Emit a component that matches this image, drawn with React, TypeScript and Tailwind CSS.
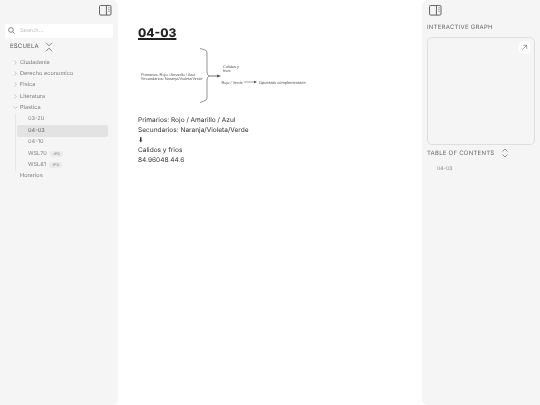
import React from "react";

const font = { fontFamily: "Inter, sans-serif" };

function PanelIcon({ className }: { className?: string }) {
  return (
    <svg viewBox="0 0 14 12" width="13" height="11" className={className} fill="none" stroke="#555" strokeWidth="1">
      <rect x="0.5" y="0.5" width="12.5" height="10.5" rx="1.2" />
      <path d="M8 0.5V11" />
      <path d="M10 3h1.5M10 5h1.5M10 7h1.5" strokeWidth="0.7" />
    </svg>
  );
}

function Chevron({ open }: { open?: boolean }) {
  return (
    <svg viewBox="0 0 6 6" className="w-[5px] h-[5px] shrink-0 -mt-[1px]" fill="none" stroke="#aaa" strokeWidth="0.7">
      {open ? <path d="M0.7 1.8 3 4.2l2.3-2.4" /> : <path d="M1.8 0.7 4.2 3 1.8 5.3" />}
    </svg>
  );
}

function Row({ label, open, chevron = true }: { label: string; open?: boolean; chevron?: boolean }) {
  return (
    <div className="flex items-center h-[11.4px] pl-[13px] gap-[2px] text-[5.6px] text-[#7a7a7a]">
      {chevron ? <Chevron open={open} /> : <span className="w-[5px]" />}
      <span>{label}</span>
    </div>
  );
}

function Leaf({ label, tag, active }: { label: string; tag?: string; active?: boolean }) {
  return (
    <div className={`flex items-center h-[11.4px] pl-[11px] gap-[3px] text-[5.6px] rounded-[2px] ${active ? "bg-[#e3e3e3] text-[#666]" : "text-[#858585]"}`}>
      <span>{label}</span>
      {tag && <span className="bg-[#ebebeb] rounded-[2px] px-[3px] text-[3.5px] leading-[6px] tracking-wide text-[#777]">{tag}</span>}
    </div>
  );
}

function Diagram() {
  const t = { fontFamily: "'Liberation Sans', Arial, sans-serif", fontSize: 3.9, fill: "#555" };
  return (
    <svg width="170" height="56" viewBox="0 0 170 56" className="mt-[6px] block">
      <text x="3" y="27.5" style={t}>Primarios: Rojo / Amarillo / Azul</text>
      <text x="3" y="32" style={t}>Secundarios: Naranja/Violeta/Verde</text>
      <path d="M62 0.5 L67 2 Q69 2.5 69 5 V24 Q69 27 71 28 Q69 29 69 32 V50 Q69 52 67 52.5 L62 54.5" fill="none" stroke="#666" strokeWidth="0.7" />
      <path d="M71 28h10" stroke="#666" strokeWidth="0.9" />
      <path d="M79 26.5 83 28l-4 1.5z" fill="#555" />
      <text x="85" y="20" style={t}>Calidos y</text>
      <text x="85" y="24" style={t}>frios</text>
      <text x="83.5" y="35.5" style={t}>Rojo / Verde</text>
      <path d="M106 34h12" stroke="#666" strokeWidth="0.6" />
      <path d="M116 32.8 119 34l-3 1.2z" fill="#555" />
      <text x="121" y="35.5" style={{ ...t, fontSize: 4 }}>Opuestos complementarie</text>
    </svg>
  );
}

export default function App() {
  return (
    <div style={font} className="flex w-[540px] h-[405px] overflow-hidden bg-white [text-rendering:geometricPrecision]">
      <aside className="w-[118px] shrink-0 h-full bg-[#f5f5f5] rounded-r-[6px]">
        <div className="flex flex-col h-full will-change-transform">
          <div className="flex justify-end pt-[5px] pr-[6px] h-[24px]">
            <PanelIcon />
          </div>
          <div className="mx-[5px] h-[14px] bg-white rounded-[2px] flex items-center pl-[3px] gap-[5px] text-[5.6px] text-[#c0c0c0]">
            <svg viewBox="0 0 8 8" className="w-[7px] h-[7px] -mt-[1px]" fill="none" stroke="#555" strokeWidth="0.8">
              <circle cx="3.4" cy="3.4" r="2.7" />
              <path d="M5.4 5.4 7.5 7.5" />
            </svg>
            <span>Search...</span>
          </div>
          <div className="flex items-center h-[13px] mt-[2px] pl-[10px] gap-[6px] text-[6px] tracking-[0.2px] text-[#555]">
            <span>ESCUELA</span>
            <svg viewBox="0 0 8 10" className="w-[8px] h-[10px]" fill="none" stroke="#555" strokeWidth="0.7">
              <path d="M1 0.8 4 3.8l3-3M1 9.2 4 6.2l3 3" />
            </svg>
          </div>
          <div className="mt-[4px] flex flex-col">
            <Row label="Ciudadania" />
            <Row label="Derecho economico" />
            <Row label="Fisica" />
            <Row label="Literatura" />
            <Row label="Plastica" open />
            <div className="ml-[15px] mr-[10px] pl-[1px] border-l border-[#e6e6e6] flex flex-col">
              <Leaf label="03-20" />
              <Leaf label="04-03" active />
              <Leaf label="04-10" />
              <Leaf label="WSL70" tag="JPG" />
              <Leaf label="WSL81" tag="JPG" />
            </div>
            <Row label="Horarios" chevron={false} />
          </div>
        </div>
      </aside>

      <main className="flex-1 pl-[20px] pt-[23px] will-change-transform">
        <h1 className="text-[12px] leading-[19px] font-extrabold text-[#222] underline decoration-[1.5px] underline-offset-[1px]">04-03</h1>
        <Diagram />
        <div className="mt-[10.5px] text-[6.55px] leading-[10.2px] text-[#333]">
          <p>Primarios: Rojo / Amarillo / Azul</p>
          <p>Secundarios: Naranja/Violeta/Verde</p>
          <p>⬇</p>
          <p>Calidos y frios</p>
          <p>84.96048.44.6</p>
        </div>
      </main>

      <aside className="w-[118px] shrink-0 h-full bg-[#f5f5f5] rounded-l-[6px]">
        <div className="flex flex-col h-full px-[5px] will-change-transform">
          <div className="pt-[5px] pl-[2px] h-[21px]">
            <PanelIcon />
          </div>
          <div className="text-[6px] leading-[8px] tracking-[0.25px] text-[#666] mt-[3px]">INTERACTIVE GRAPH</div>
          <div className="mt-[5px] h-[108px] border border-[#dedede] rounded-[5px] flex justify-end items-start p-[3px]">
            <div className="w-[13px] h-[13px] rounded-full bg-white flex items-center justify-center">
              <svg viewBox="0 0 8 8" className="w-[7px] h-[7px]" fill="none" stroke="#666" strokeWidth="0.7">
                <path d="M1.5 6.5 6.5 1.5M2.5 1.5h4v4" />
              </svg>
            </div>
          </div>
          <div className="flex items-center h-[14px] gap-[7px] mt-[1px] text-[6px] tracking-[0.25px] text-[#666]">
            <span>TABLE OF CONTENTS</span>
            <svg viewBox="0 0 8 10" className="w-[8px] h-[10px]" fill="none" stroke="#666" strokeWidth="0.7">
              <path d="M1.5 3.5 4 1l2.5 2.5M1.5 6.5 4 9l2.5-2.5" />
            </svg>
          </div>
          <div className="mt-[5.5px] pl-[10px] text-[5.2px] text-[#858585]">04-03</div>
        </div>
      </aside>
    </div>
  );
}
